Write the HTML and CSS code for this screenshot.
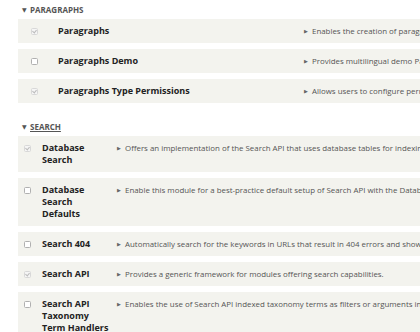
FILE: index.html
```
<!DOCTYPE html>
<html lang="en">
<head>
    <meta charset="UTF-8">
    <meta name="viewport" content="width=device-width, initial-scale=1.0">
    <title>Extend</title>
    <link rel="stylesheet" href="styles.css">
</head>
<body>
    <div class="package">
        <h3 class="package-title"><span class="arrow">&#9660;</span>PARAGRAPHS</h3>
        <div class="modules paragraphs">
            <div class="module">
                <span class="check checked"></span>
                <span class="name">Paragraphs</span>
                <span class="desc"><span class="more">&#9654;</span>Enables the creation of paragraphs entities.</span>
            </div>
            <div class="module">
                <span class="check"></span>
                <span class="name">Paragraphs Demo</span>
                <span class="desc"><span class="more">&#9654;</span>Provides multilingual demo Paragraphs content.</span>
            </div>
            <div class="module">
                <span class="check checked"></span>
                <span class="name">Paragraphs Type Permissions</span>
                <span class="desc"><span class="more">&#9654;</span>Allows users to configure permissions for individual Paragraphs types.</span>
            </div>
        </div>
    </div>

    <div class="package">
        <h3 class="package-title"><span class="arrow">&#9660;</span><a href="#search">SEARCH</a></h3>
        <div class="modules search">
            <div class="module">
                <span class="check checked"></span>
                <span class="name">Database Search</span>
                <span class="desc"><span class="more">&#9654;</span>Offers an implementation of the Search API that uses database tables for indexing content.</span>
            </div>
            <div class="module">
                <span class="check"></span>
                <span class="name">Database Search Defaults</span>
                <span class="desc"><span class="more">&#9654;</span>Enable this module for a best-practice default setup of Search API with the Database backend.</span>
            </div>
            <div class="module">
                <span class="check"></span>
                <span class="name">Search 404</span>
                <span class="desc"><span class="more">&#9654;</span>Automatically search for the keywords in URLs that result in 404 errors and show results instead.</span>
            </div>
            <div class="module">
                <span class="check checked"></span>
                <span class="name">Search API</span>
                <span class="desc"><span class="more">&#9654;</span>Provides a generic framework for modules offering search capabilities.</span>
            </div>
            <div class="module">
                <span class="check"></span>
                <span class="name">Search API Taxonomy Term Handlers</span>
                <span class="desc"><span class="more">&#9654;</span>Enables the use of Search API indexed taxonomy terms as filters or arguments in Views.</span>
            </div>
        </div>
    </div>
</body>
</html>
```

FILE: styles.css
```
body {
    margin: 0;
    overflow: hidden;
    font-family: "Open Sans", "DejaVu Sans", sans-serif;
    color: #222;
    background: #fff;
}
.package {
    padding-left: 18px;
}
.package-title {
    margin: 0;
    padding: 4px 0 0 4px;
    height: 15px;
    font-size: 8px;
    font-weight: bold;
    line-height: 12px;
    color: #555;
}
.package + .package .package-title {
    padding-top: 18px;
}
.package-title a {
    color: #555;
    text-decoration: underline;
}
.arrow {
    display: inline-block;
    width: 8px;
    font-size: 6px;
    vertical-align: 1px;
}
.modules {
    display: flex;
    flex-direction: column;
    gap: 6px;
}
.module {
    display: grid;
    align-items: start;
    padding: 6px 0;
    background: #f3f3ee;
    white-space: nowrap;
    overflow: hidden;
}
.paragraphs .module {
    grid-template-columns: 40px 246px 1fr;
}
.paragraphs .check {
    margin-left: 13px;
}
.search .module {
    grid-template-columns: 24px 75px 1fr;
}
.search .check {
    margin-left: 6px;
}
.search .name {
    padding-right: 6px;
    white-space: normal;
}
.check {
    box-sizing: border-box;
    width: 7px;
    height: 7px;
    margin-top: 3px;
    border: 1px solid #b0b0b0;
    border-radius: 1.5px;
    background: #fff;
    position: relative;
}
.check.checked {
    border-color: #d8d8d8;
    background: #f5f5f5;
}
.check.checked::after {
    content: "";
    position: absolute;
    left: 1px;
    top: 0;
    width: 2px;
    height: 3px;
    border: solid #bbb;
    border-width: 0 1px 1px 0;
    transform: rotate(40deg);
}
.name {
    font-size: 9px;
    font-weight: bold;
    line-height: 12px;
    color: #222;
}
.desc {
    font-size: 7.9px;
    line-height: 12px;
    color: #555;
}
.more {
    display: inline-block;
    width: 8px;
    font-size: 5px;
    color: #666;
    vertical-align: 1px;
}
```
